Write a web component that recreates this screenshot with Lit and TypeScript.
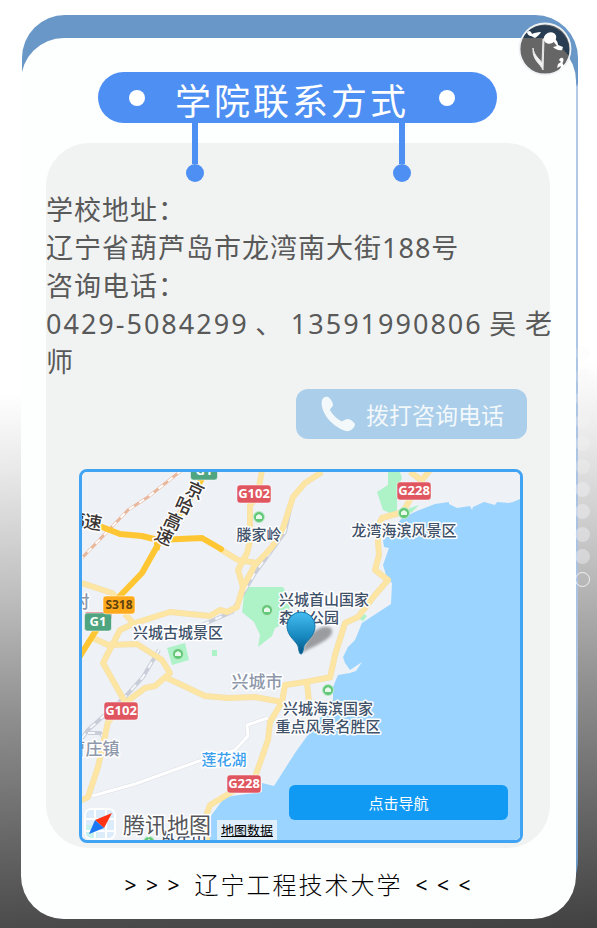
import { LitElement, html, svg, css } from "lit";
import { customElement } from "lit/decorators.js";

interface Label {
  x: number;
  y: number;
  text: string;
  kind?: string;
  turn?: number;
}

interface Shield {
  x: number;
  y: number;
  w: number;
  text: string;
  kind: string;
}

const labels: Label[] = [
  { x: 259, y: 540, text: "滕家岭" },
  { x: 404, y: 536, text: "龙湾海滨风景区" },
  { x: 178, y: 638, text: "兴城古城景区" },
  { x: 324, y: 605, text: "兴城首山国家" },
  { x: 309, y: 623, text: "森林公园" },
  { x: 257, y: 688, text: "兴城市", kind: "town" },
  { x: 328, y: 714, text: "兴城海滨国家" },
  { x: 328, y: 732, text: "重点风景名胜区" },
  { x: 224, y: 765, text: "莲花湖", kind: "lake" },
  { x: 94, y: 755, text: "曹庄镇", kind: "town" },
  { x: 81, y: 608, text: "村", kind: "town" },
  { x: 184, y: 846, text: "卧牛山" },
  { x: 195, y: 497, text: "京", kind: "road", turn: 24 },
  { x: 184, y: 512, text: "哈", kind: "road", turn: 24 },
  { x: 173, y: 528, text: "高", kind: "road", turn: 24 },
  { x: 164, y: 543, text: "速", kind: "road", turn: 24 },
  { x: 77, y: 526, text: "高", kind: "road", turn: 10 },
  { x: 93, y: 529, text: "速", kind: "road", turn: 10 },
];

const shields: Shield[] = [
  { x: 254, y: 494, w: 34, text: "G102", kind: "red" },
  { x: 414, y: 491, w: 34, text: "G228", kind: "red" },
  { x: 121, y: 711, w: 34, text: "G102", kind: "red" },
  { x: 244, y: 784, w: 34, text: "G228", kind: "red" },
  { x: 98, y: 622, w: 27, text: "G1", kind: "green" },
  { x: 204, y: 471, w: 27, text: "G1", kind: "green" },
  { x: 119, y: 605, w: 32, text: "S318", kind: "orange" },
];

const localRoads = [
  "M262 470L257 498L250 505V542L247 553L238 570L243 587",
  "M322 472L305 483L293 497L283 528L272 547L255 565L243 587L237 607L227 612L220 610L210 616L170 612L135 623L120 630L107 655L103 663L125 702",
  "M220 549L238 560L257 563",
  "M82 583L112 593L118 600M125 614L133 623",
  "M93 638L108 645L137 644L162 660L170 673L155 686L145 688L125 703L108 722L98 767L88 797L80 801",
  "M167 678L205 696L228 698L255 697L282 702L285 685L305 682L332 677",
  "M430 470L418 485L408 503L403 512L382 518L377 528L379 555L375 570L388 580L375 595L358 617L345 623L335 655L330 678",
  "M307 683L309 702M410 472L424 482",
  "M282 702L270 722L268 740L255 777L235 790L210 805L207 813V842",
];

const parks = [
  "M245 587L283 587L290 600L288 622L275 628L272 636L258 647L260 635L254 622L242 612Z",
  "M388 472H400L402 478L397 490V510L392 514L383 510L377 492L388 485Z",
  "M167 648L185 643L189 660L172 665Z",
  "M212 650H217V656H212Z",
  "M362 613L367 616L363 621L358 618Z",
  "M410 508L419 505L412 512L400 518Z",
];

@customElement("area-map")
export class AreaMap extends LitElement {
  static styles = css`
    :host {
      display: block;
      font-family: "Noto Sans", "Noto Sans CJK SC", sans-serif;
    }
    .map {
      position: relative;
      overflow: hidden;
      border: 3px solid #40a3f4;
      border-radius: 8px;
      background: #eef1f6;
    }
    .canvas {
      display: block;
      width: 100%;
      height: auto;
    }
    .land { fill: #eef1f6; }
    .sea { fill: #9ad4ff; }
    .park { fill: #aef2c8; }
    .line { fill: none; stroke-linejoin: round; }
    .rail-edge { stroke: #c9cdd8; stroke-width: 4; }
    .rail-core { stroke: #f6f8fb; stroke-width: 2; stroke-dasharray: 7 7; }
    .metro-edge { stroke: #e9b79c; stroke-width: 3; }
    .metro-core { stroke: #ffffff; stroke-width: 2; stroke-dasharray: 6 6; }
    .lane-edge { stroke: #dcdfe5; stroke-width: 4; }
    .lane { stroke: #ffffff; stroke-width: 3; }
    .road-edge { stroke: #f3dfae; stroke-width: 6; }
    .road { stroke: #fde6a3; stroke-width: 5; }
    .highway { stroke: #ffc633; stroke-width: 6; stroke-linecap: round; }
    .label {
      font-size: 15px;
      font-weight: 500;
      text-anchor: middle;
      fill: #40516a;
      stroke: #ffffff;
      stroke-width: 3px;
      stroke-linejoin: round;
      paint-order: stroke;
    }
    .label.town { font-size: 17px; fill: #8e98aa; }
    .label.lake { fill: #3c9fee; }
    .label.road-name { font-size: 18px; fill: #3b3633; }
    .shield { stroke: #ffffff; stroke-opacity: 0.5; }
    .shield.red { fill: #df5660; }
    .shield.green { fill: #50a581; }
    .shield.orange { fill: #ffaa1c; }
    .code {
      font-size: 13px;
      font-weight: 700;
      text-anchor: middle;
      fill: #ffffff;
    }
    .code.orange { font-size: 12px; fill: #60430f; }
    .spot { fill: #62c878; stroke: #bdebc8; stroke-width: 1; }
    .spot-mark { fill: #e8f9ec; }
    .brand {
      position: absolute;
      left: 2px;
      bottom: 0;
      display: flex;
      align-items: flex-end;
    }
    .logo { width: 32px; height: 32px; display: block; }
    .name {
      margin-left: 7px;
      font-size: 22px;
      line-height: 32px;
      color: #55565a;
      -webkit-text-stroke: 3px #ffffff;
      paint-order: stroke fill;
    }
    .data {
      margin-left: 6px;
      padding: 0 4px;
      font-size: 13px;
      line-height: 20px;
      color: #000000;
      background: rgba(240, 244, 250, 0.8);
    }
    .go {
      position: absolute;
      right: 12px;
      bottom: 20px;
      width: 50%;
      height: 35px;
      padding: 0;
      border: 0;
      border-radius: 6px;
      background: #109af3;
      color: #ffffff;
      font: inherit;
      font-size: 15px;
    }
  `;

  private spot(x: number, y: number) {
    return svg`
      <circle class="spot" cx=${x} cy=${y} r="5.5"></circle>
      <path class="spot-mark" d="M${x - 3} ${y + 2}V${y - 1}L${x} ${y - 3}L${x + 3} ${y - 1}V${y + 2}Z"></path>`;
  }

  render() {
    const rail =
      "M292 500L285 532L255 573L232 612L202 625L155 638M159 650L143 677L125 697L88 730L82 738M88 733H100L106 740";
    const metro = "M182 470L148 497L128 510L82 558";
    const lane = "M92 796L135 784L202 760L235 750L248 736L247 725L268 718";
    return html`
      <div class="map">
        <svg class="canvas" viewBox="82 472 438 368" role="img" aria-label="兴城市地图">
          <defs>
            <linearGradient id="pin" x1="0" y1="0" x2="0" y2="1">
              <stop offset="0" stop-color="#45bdf2"></stop>
              <stop offset="0.6" stop-color="#1687bd"></stop>
              <stop offset="1" stop-color="#075483"></stop>
            </linearGradient>
            <filter id="soft" x="-50%" y="-50%" width="200%" height="200%">
              <feGaussianBlur stdDeviation="1.5"></feGaussianBlur>
            </filter>
          </defs>
          <rect class="land" x="82" y="472" width="438" height="368"></rect>
          ${parks.map((d) => svg`<path class="park" d=${d}></path>`)}
          <path
            class="sea"
            d="M520 499L513 502L509 503L497 502L495 505L484 502L473 507L472 510L470 506L457 508L449 504V502L435 504L417 511L402 518L395 527L383 540L384 547L389 548L383 565L387 578L392 583L391 604L362 623L355 640L348 647L343 657L345 663L350 670L362 662L356 671L350 673L338 675L333 687V700L310 732L295 753L274 786L262 783V792L225 797L210 817L208 840H520Z"
          ></path>
          <path class="line metro-edge" d=${metro}></path>
          <path class="line metro-core" d=${metro}></path>
          <path class="line rail-edge" d=${rail}></path>
          <path class="line rail-core" d=${rail}></path>
          <path class="line lane-edge" d=${lane}></path>
          <path class="line lane" d=${lane}></path>
          ${localRoads.map((d) => svg`<path class="line road-edge" d=${d}></path>`)}
          ${localRoads.map((d) => svg`<path class="line road" d=${d}></path>`)}
          <path class="line highway" d="M80 523L102 527L120 534L142 536L158 540L202 538L221 549"></path>
          <path class="line highway" d="M207 470L188 502L160 541L142 573L118 598L95 632L80 656M157 541V548"></path>
          ${this.spot(259, 517)} ${this.spot(404, 513)} ${this.spot(267, 610)}
          ${this.spot(178, 654)} ${this.spot(328, 690)} ${this.spot(149, 842)}
          ${labels.map(
            (l) => svg`<text
              class="label ${l.kind === "road" ? "road-name" : l.kind ?? ""}"
              x=${l.x} y=${l.y}
              transform=${`rotate(${l.turn ?? 0} ${l.x} ${l.y - 6})`}>${l.text}</text>`
          )}
          <rect class="shield red" x="85" y="612" width="27" height="8" rx="2"></rect>
          ${shields.map(
            (s) => svg`
              <rect class="shield ${s.kind}" x=${s.x - s.w / 2} y=${s.y - 9} width=${s.w} height="18" rx="3"></rect>
              <text class="code ${s.kind}" x=${s.x} y=${s.y + 4}>${s.text}</text>`
          )}
          <path
            d="M302 653C306 640 312 630 323 627C334 625 335 633 327 639C319 645 309 648 302 653Z"
            fill="#000000"
            opacity="0.35"
            filter="url(#soft)"
          ></path>
          <path
            d="M301 654C299 654 299 650 298 646C296 641 287 636 287 626A14 14 0 0 1 315 626C315 636 306 641 304 646C303 650 303 654 301 654Z"
            fill="url(#pin)"
            stroke="#1477a8"
          ></path>
        </svg>
        <div class="brand">
          <svg class="logo" viewBox="0 0 32 32" aria-hidden="true">
            <rect width="32" height="32" rx="7" fill="#dcecfb"></rect>
            <path d="M0 17H13V32H7A7 7 0 0 1 0 25Z" fill="#c8f2ee"></path>
            <path d="M1 11H31M1 23H31M11 1V31M22 1V31" stroke="#ffffff" stroke-width="2"></path>
            <rect x="1" y="1" width="30" height="30" rx="6" fill="none" stroke="#ffffff" stroke-width="2"></rect>
            <path d="M28 5L11 12L20 20Z" fill="#ff3213"></path>
            <path d="M5 26L11 12L20 20Z" fill="#1b78f5"></path>
          </svg>
          <span class="name">腾讯地图</span>
          <a class="data" href="#data">地图数据</a>
        </div>
        <button class="go" type="button">点击导航</button>
      </div>
    `;
  }
}

@customElement("app-root")
export class AppRoot extends LitElement {
  static styles = css`
    :host {
      display: block;
      position: relative;
      box-sizing: border-box;
      min-height: 100vh;
      padding: 15px 19px 9px 22px;
      font-family: "Noto Sans", "Noto Sans CJK SC", sans-serif;
      background: linear-gradient(
        177deg,
        #ffffff 41%,
        #e9e9e9 49%,
        #c2c2c2 61%,
        #8e8e8e 75%,
        #5c5c5c 91%,
        #414141 100%
      );
    }
    .frame {
      padding-top: 23px;
      border-radius: 43px 43px 60px 43px;
      background: linear-gradient(#6997c7 68px, #b3cae8 72px, #a6c0e2 75%, #6997c7 95%);
    }
    .card {
      margin: 0 2px 0 -1px;
      padding-top: 34px;
      border-radius: 43px;
      background: #fdfefe;
    }
    .title {
      position: relative;
      display: flex;
      align-items: center;
      justify-content: space-between;
      height: 51px;
      margin: 0 79px 0 77px;
      padding: 0 42px 0 31px;
      border-radius: 26px;
      background: #4e8ff3;
    }
    .heading {
      margin: 8px 0 0;
      font-size: 36px;
      font-weight: 400;
      line-height: 51px;
      letter-spacing: 3px;
      color: #ffffff;
    }
    .rivet {
      width: 16px;
      height: 16px;
      border-radius: 50%;
      background: #ffffff;
    }
    .hanger {
      position: absolute;
      top: 51px;
      display: flex;
      flex-direction: column;
      align-items: center;
      width: 18px;
    }
    .hanger::before {
      content: "";
      width: 6px;
      height: 41px;
      background: #4e8ff3;
    }
    .hanger::after {
      content: "";
      width: 18px;
      height: 18px;
      border-radius: 50%;
      background: #4e8ff3;
    }
    .hanger.left { left: 88px; }
    .hanger.right { right: 86px; }
    .panel {
      display: flex;
      flex-direction: column;
      margin: 20px 26px 0 25px;
      padding: 48px 0 5px;
      border-radius: 43px;
      background: #f1f3f3;
    }
    .line {
      margin: 0 -4px 0 0;
      font-size: 27px;
      line-height: 38px;
      letter-spacing: 1px;
      color: #595959;
    }
    .phones {
      text-align: justify;
      letter-spacing: 2px;
    }
    .call {
      display: flex;
      align-items: center;
      align-self: flex-end;
      gap: 10px;
      height: 50px;
      margin: 8px 23px 0 0;
      padding: 0 23px 0 24px;
      border: 0;
      border-radius: 12px;
      background: #abceea;
      color: #f3f8fb;
      font: inherit;
      font-size: 23px;
    }
    .handset { width: 36px; height: 36px; }
    .place { margin: 30px 27px 0 33px; }
    .school {
      display: flex;
      justify-content: center;
      gap: 13px;
      padding: 20px 0 17px;
      font-size: 24px;
      font-weight: 300;
      line-height: 34px;
      letter-spacing: 2px;
      color: #000000;
    }
    .marks {
      font-size: 21px;
      font-weight: 400;
    }
    .music {
      position: absolute;
      top: 22px;
      right: 25px;
      width: 54px;
      height: 54px;
      padding: 0;
      border: 0;
      background: none;
    }
    .disc { display: block; width: 54px; height: 54px; }
    .trail {
      position: absolute;
      top: 346px;
      right: 7px;
      display: flex;
      flex-direction: column;
      justify-content: space-between;
      height: 241px;
    }
    .bead {
      box-sizing: border-box;
      width: 15px;
      height: 15px;
      border-radius: 50%;
      background: #f4f6f9;
    }
    .bead.ring {
      border: 1px solid #ffffff;
      background: none;
      opacity: 0.8;
    }
  `;

  render() {
    const fades = [0.2, 0.2, 0.3, 0.3, 0.3, 0.3, 0.4, 0.4, 0.4, 0.4];
    return html`
      <main class="frame">
        <div class="card">
          <header class="title">
            <span class="rivet"></span>
            <h1 class="heading">学院联系方式</h1>
            <span class="rivet"></span>
            <span class="hanger left"></span>
            <span class="hanger right"></span>
          </header>
          <section class="panel">
            <p class="line">学校地址：</p>
            <p class="line">辽宁省葫芦岛市龙湾南大街188号</p>
            <p class="line">咨询电话：</p>
            <p class="line phones">0429-5084299、13591990806吴老师</p>
            <button class="call" type="button">
              <svg class="handset" viewBox="0 0 36 36" aria-hidden="true">
                <path
                  d="M2 4C3 1 6 0 8 1C10 2 13 6 13 9C13 11 10 12 10 14C12 18 17 23 21 25C23 26 25 23 28 23C30 23 34 26 35 28C35 31 32 34 29 35C24 36 16 31 10 25C5 20 0 10 2 4Z"
                  fill="#f3f8fb"
                ></path>
              </svg>
              拨打咨询电话
            </button>
            <area-map class="place"></area-map>
          </section>
          <footer class="school">
            <span class="marks">&gt; &gt; &gt;</span>
            <span>辽宁工程技术大学</span>
            <span class="marks">&lt; &lt; &lt;</span>
          </footer>
        </div>
      </main>
      <div class="trail">
        ${fades.map((o) => html`<span class="bead" style="opacity:${o}"></span>`)}
        <span class="bead ring"></span>
      </div>
      <button class="music" type="button" aria-label="音乐">
        <svg class="disc" viewBox="0 0 54 54" aria-hidden="true">
          <circle cx="27" cy="27" r="25.5" fill="#666666"></circle>
          <path d="M4 16A25.5 25.5 0 0 1 51 34L42 24L32 16Z" fill="#293d52"></path>
          <circle cx="27" cy="27" r="25.5" fill="none" stroke="#eef2f5" stroke-width="1.8"></circle>
          <g fill="#ffffff">
            <ellipse cx="32" cy="16" rx="6.5" ry="5.5" transform="rotate(-25 32 16)"></ellipse>
            <path d="M9 10C11 8 13 9 14 12C16 11 19 10 23 10C22 12 20 14 17 16L13 14C11 14 9 12 9 10Z"></path>
            <path d="M35 16C38 17 40 20 40 23L45 25L44 28C41 29 37 27 35 25L39 24C37 22 35 19 35 16Z"></path>
            <path d="M41 38C43 34 47 36 45 40C43 42 48 43 45 46L42 48L43 44L39 46L40 42L43 40Z"></path>
          </g>
          <path d="M26 17L25 48C22 41 14 38 15 26C16 34 22 37 24 41L25 17Z" fill="#f2f2f2" stroke="#e6e6e6"></path>
        </svg>
      </button>
    `;
  }
}
